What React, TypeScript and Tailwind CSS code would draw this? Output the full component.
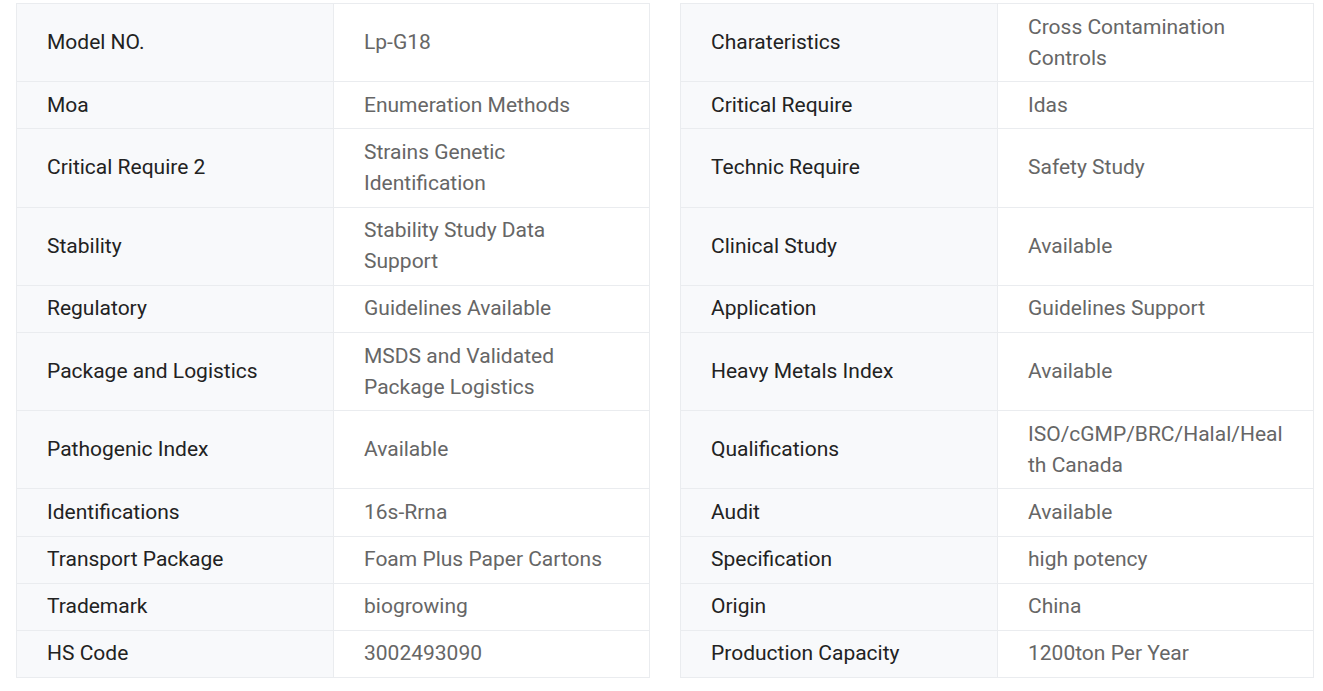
import React from 'react';

const rows: [string, string, string, string][] = [
  ['Model NO.', 'Lp-G18', 'Charateristics', 'Cross Contamination Controls'],
  ['Moa', 'Enumeration Methods', 'Critical Require', 'Idas'],
  ['Critical Require 2', 'Strains Genetic Identification', 'Technic Require', 'Safety Study'],
  ['Stability', 'Stability Study Data Support', 'Clinical Study', 'Available'],
  ['Regulatory', 'Guidelines Available', 'Application', 'Guidelines Support'],
  ['Package and Logistics', 'MSDS and Validated Package Logistics', 'Heavy Metals Index', 'Available'],
  ['Pathogenic Index', 'Available', 'Qualifications', 'ISO/cGMP/BRC/Halal/Health Canada'],
  ['Identifications', '16s-Rrna', 'Audit', 'Available'],
  ['Transport Package', 'Foam Plus Paper Cartons', 'Specification', 'high potency'],
  ['Trademark', 'biogrowing', 'Origin', 'China'],
  ['HS Code', '3002493090', 'Production Capacity', '1200ton Per Year'],
];

export default function App() {
  return (
    <div className="bg-white min-h-[691px] pt-[3px] pl-[16px] font-['Roboto',sans-serif] text-[21px] leading-[31px]">
      <div className="grid grid-cols-[318px_316px_30px_318px_316px]">
        {rows.map((r, i) => {
          const top = i === 0 ? 'border-t' : '';
          return (
            <React.Fragment key={i}>
              <div className={`flex items-center bg-[#f8f9fb] text-[#222] px-[30px] py-[7.6px] border-l border-r border-b border-[#eaecef] ${top}`}>
                {r[0]}
              </div>
              <div className={`flex items-center bg-white text-[#666] px-[30px] py-[7.6px] border-r border-b border-[#eaecef] ${top}`}>
                <span className="min-w-0 break-words">{r[1]}</span>
              </div>
              <div />
              <div className={`flex items-center bg-[#f8f9fb] text-[#222] px-[30px] py-[7.6px] border-l border-r border-b border-[#eaecef] ${top}`}>
                {r[2]}
              </div>
              <div className={`flex items-center bg-white text-[#666] px-[30px] py-[7.6px] border-r border-b border-[#eaecef] ${top}`}>
                <span className={`min-w-0 ${r[3].includes('/') ? 'break-all' : 'break-words'}`}>{r[3]}</span>
              </div>
            </React.Fragment>
          );
        })}
      </div>
    </div>
  );
}
